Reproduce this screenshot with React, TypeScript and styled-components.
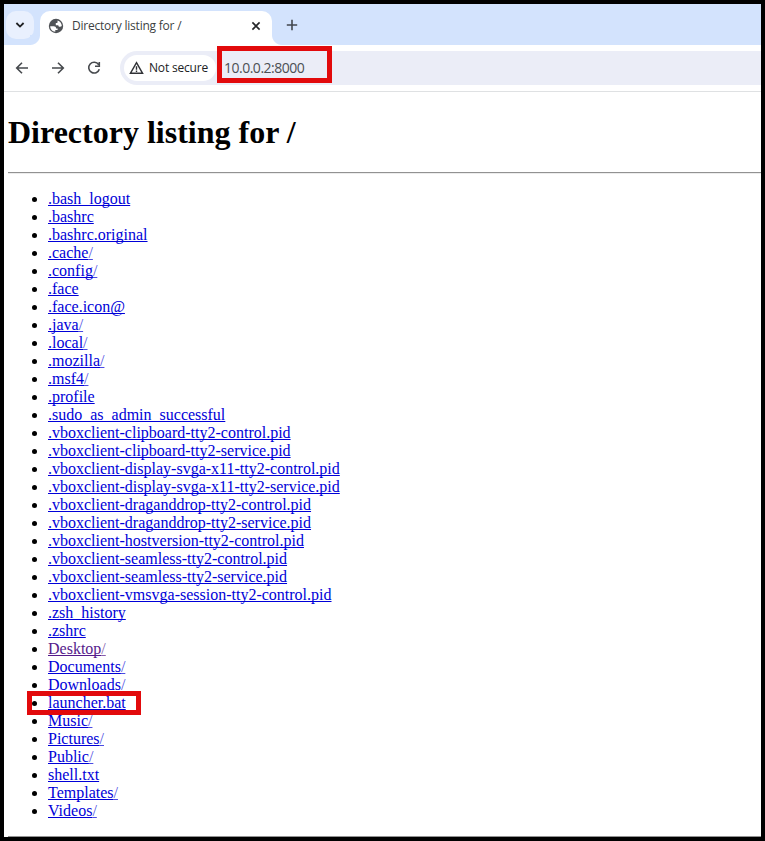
import React from "react";
import styled, { createGlobalStyle } from "styled-components";

const GlobalStyle = createGlobalStyle`
  body { margin: 0; background: #000; }
  * { box-sizing: border-box; }
`;

const Frame = styled.div`
  width: 765px;
  height: 841px;
  border: 4px solid #000;
  background: #fff;
  overflow: hidden;
`;

const TabStrip = styled.div`
  display: flex;
  height: 41px;
  padding: 7px 0 0 2px;
  background: #d3e3fd;
`;

const TabSearch = styled.button`
  display: grid;
  place-items: center;
  width: 28px;
  height: 28px;
  padding: 0;
  border: 0;
  border-radius: 10px;
  background: #e9f0fe;
`;

const Flare = styled.div<{ $side: "left" | "right" }>`
  align-self: flex-end;
  width: 10px;
  height: 10px;
  margin-left: ${(p) => (p.$side === "left" ? "-4px" : "0")};
  background: radial-gradient(
    circle at ${(p) => (p.$side === "left" ? "0 0" : "100% 0")},
    #d3e3fd 9.5px,
    #fff 10.5px
  );
`;

const Tab = styled.div`
  display: flex;
  align-items: center;
  width: 232px;
  height: 34px;
  padding: 0 11px 5px 8px;
  border-radius: 10px 10px 0 0;
  background: #fff;
`;

const TabTitle = styled.span`
  flex: 1;
  margin-left: 8px;
  font: 12px/16px "Open Sans", sans-serif;
  letter-spacing: -0.22px;
  color: #3c3f43;
  white-space: nowrap;
`;

const NewTab = styled.div`
  display: grid;
  place-items: center;
  width: 20px;
  height: 28px;
`;

const Toolbar = styled.div`
  display: flex;
  align-items: center;
  height: 47px;
  padding-left: 9px;
  border-bottom: 1px solid #dfe1e3;
`;

const NavButton = styled.div`
  display: grid;
  place-items: center;
  width: 18px;
  height: 18px;
  margin-right: 18px;
`;

const Omnibox = styled.div`
  display: flex;
  align-items: center;
  flex: 1;
  height: 34px;
  margin-left: -1px;
  padding-left: 4px;
  border-radius: 17px 0 0 17px;
  background: #ebedf7;
`;

const SecurityChip = styled.div`
  display: flex;
  align-items: center;
  width: 92px;
  height: 26px;
  padding-left: 5px;
  border-radius: 13px;
  background: #fff;
`;

const ChipText = styled.span`
  margin-left: 5px;
  font: 500 12px/16px "Open Sans", sans-serif;
  letter-spacing: -0.18px;
  color: #202124;
  white-space: nowrap;
`;

const AddressMark = styled.div`
  display: flex;
  align-items: center;
  flex-shrink: 0;
  width: 115px;
  height: 37px;
  margin: 0 0 7px 1px;
  padding: 7px 0 0 2px;
  border: 5px solid #e20a0c;
`;

const Address = styled.span`
  font: 14px/18px "Open Sans", sans-serif;
  letter-spacing: -0.5px;
  color: #4c4f54;
`;

const Page = styled.main`
  padding: 0 0 0 4px;
  font: 16px/18px "Liberation Serif", serif;
  color: #000;
`;

const Heading = styled.h1`
  height: 37px;
  margin: 22px 0 21px;
  font-size: 32px;
  line-height: 37px;
  font-weight: 700;
`;

const Rule = styled.hr`
  height: 2px;
  margin: 0;
  border: 0;
  border-top: 1px solid #929292;
  border-bottom: 1px solid #ececec;
`;

const Listing = styled.ul`
  margin: 16px 0;
  padding-left: 40px;
`;

const Entry = styled.li`
  position: relative;
  height: 18px;
`;

const Link = styled.a<{ $visited: boolean }>`
  color: ${(p) => (p.$visited ? "#551a8b" : "#0000d8")};
  text-decoration: underline;
  text-decoration-thickness: 1px;
  text-decoration-skip-ink: none;
  text-underline-offset: 1px;
`;

const Slash = styled.span`
  opacity: 0.7;
`;

const EntryMark = styled.div`
  position: absolute;
  left: -21px;
  top: -3px;
  width: 114px;
  height: 24px;
  border: 5px solid #e20a0c;
  z-index: 1;
`;

const entries = [
  ".bash_logout", ".bashrc", ".bashrc.original", ".cache/", ".config/", ".face",
  ".face.icon@", ".java/", ".local/", ".mozilla/", ".msf4/", ".profile",
  ".sudo_as_admin_successful",
  ".vboxclient-clipboard-tty2-control.pid",
  ".vboxclient-clipboard-tty2-service.pid",
  ".vboxclient-display-svga-x11-tty2-control.pid",
  ".vboxclient-display-svga-x11-tty2-service.pid",
  ".vboxclient-draganddrop-tty2-control.pid",
  ".vboxclient-draganddrop-tty2-service.pid",
  ".vboxclient-hostversion-tty2-control.pid",
  ".vboxclient-seamless-tty2-control.pid",
  ".vboxclient-seamless-tty2-service.pid",
  ".vboxclient-vmsvga-session-tty2-control.pid",
  ".zsh_history", ".zshrc", "Desktop/", "Documents/", "Downloads/",
  "launcher.bat", "Music/", "Pictures/", "Public/", "shell.txt", "Templates/", "Videos/",
];

const Chevron = () => (
  <svg width="10" height="8" viewBox="0 0 10 8" fill="none" stroke="#1f2023" strokeWidth="1.8">
    <path d="M1.4 2 5 5.6 8.6 2" />
  </svg>
);

const Globe = () => (
  <svg width="16" height="16" viewBox="0 0 16 16">
    <circle cx="8" cy="8" r="7.2" fill="#505357" />
    <path d="M2.2 8.2h3.4c1.6 0 2.5.8 2.5 2.2h1.5v1.5H7.3v1.8C4.4 13.5 2.2 11.1 2.2 8.2Z" fill="#fff" />
    <path d="M9.6 2.4c2.4.7 4.2 2.9 4.2 5.7-.5.5-1.1.7-1.8.7-1 0-1.6-.7-1.7-1.6H7.8V5.1h1.5c.2-.8.3-1.8.3-2.7Z" fill="#fff" />
  </svg>
);

const Close = () => (
  <svg width="10" height="10" viewBox="0 0 10 10" stroke="#242629" strokeWidth="1.6">
    <path d="m1.4 1.4 7.2 7.2M8.6 1.4 1.4 8.6" />
  </svg>
);

const Plus = () => (
  <svg width="12" height="12" viewBox="0 0 12 12" stroke="#43474e" strokeWidth="1.6">
    <path d="M6 .8v10.4M.8 6h10.4" />
  </svg>
);

const Arrow = ({ forward = false }: { forward?: boolean }) => (
  <svg width="14" height="14" viewBox="0 0 14 14" fill="none" stroke="#46494d" strokeWidth="1.6">
    {forward ? <path d="M1 7h11.2M7 1.7 12.3 7 7 12.3" /> : <path d="M13 7H1.8M7 1.7 1.7 7 7 12.3" />}
  </svg>
);

const Reload = () => (
  <svg width="14" height="14" viewBox="0 0 14 14" fill="none" stroke="#46494d" strokeWidth="1.6">
    <path d="M11.6 3.6A5.4 5.4 0 1 0 12.3 8.2M12.3 1v4.3H8" />
  </svg>
);

const Warning = () => (
  <svg width="15" height="14" viewBox="0 0 15 14" fill="none" stroke="#303236" strokeWidth="1.4">
    <path d="M7.5 1.6 13.6 12.3H1.4ZM7.5 5.2v3.5M7.5 9.6V11" />
  </svg>
);

const FileEntry = ({ name }: { name: string }) => {
  const isFolder = name.endsWith("/");
  return (
    <Entry>
      <Link $visited={name === "Desktop/"}>
        {isFolder ? name.slice(0, -1) : name}
        {isFolder && <Slash>/</Slash>}
      </Link>
      {name === "launcher.bat" && <EntryMark />}
    </Entry>
  );
};

export default function App() {
  return (
    <Frame>
      <GlobalStyle />
      <TabStrip>
        <TabSearch><Chevron /></TabSearch>
        <Flare $side="left" />
        <Tab>
          <Globe />
          <TabTitle>Directory listing for /</TabTitle>
          <Close />
        </Tab>
        <Flare $side="right" />
        <NewTab><Plus /></NewTab>
      </TabStrip>
      <Toolbar>
        <NavButton><Arrow /></NavButton>
        <NavButton><Arrow forward /></NavButton>
        <NavButton><Reload /></NavButton>
        <Omnibox>
          <SecurityChip>
            <Warning />
            <ChipText>Not secure</ChipText>
          </SecurityChip>
          <AddressMark><Address>10.0.0.2:8000</Address></AddressMark>
        </Omnibox>
      </Toolbar>
      <Page>
        <Heading>Directory listing for /</Heading>
        <Rule />
        <Listing>
          {entries.map((name) => <FileEntry key={name} name={name} />)}
        </Listing>
        <Rule />
      </Page>
    </Frame>
  );
}
